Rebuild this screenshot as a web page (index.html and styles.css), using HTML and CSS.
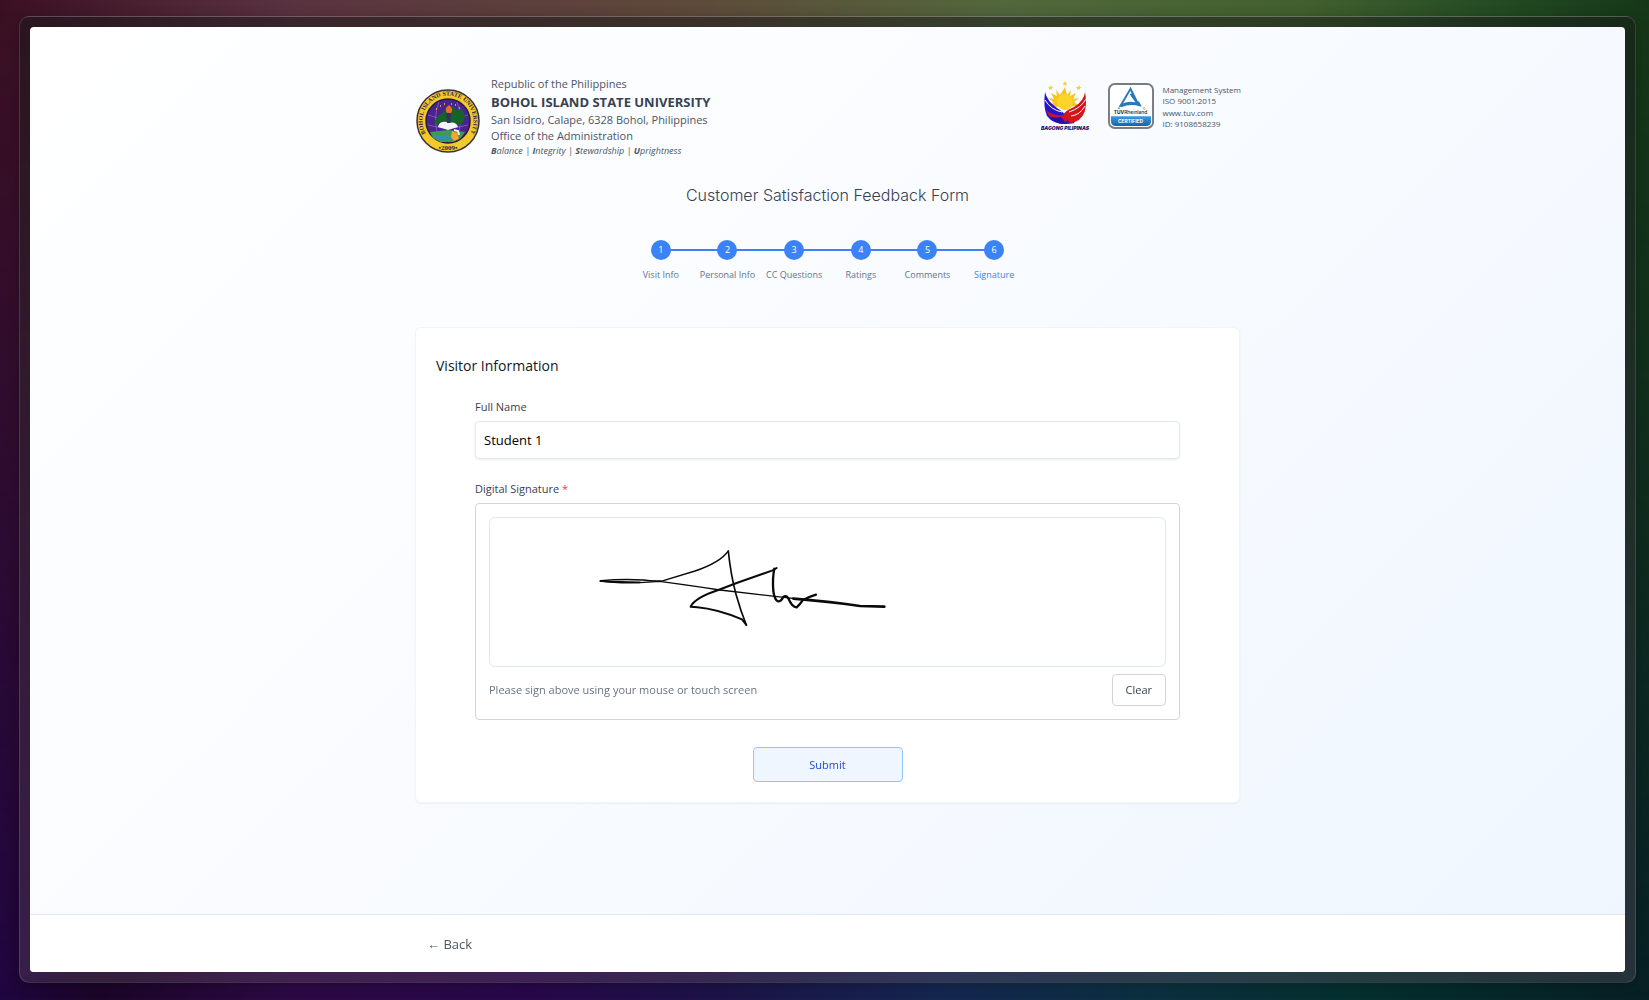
FILE: index.html
```html
<!DOCTYPE html>
<html lang="en">
<head>
<meta charset="utf-8">
<meta name="viewport" content="width=device-width, initial-scale=1">
<title>Customer Satisfaction Feedback Form</title>
<link rel="stylesheet" href="styles.css">
</head>
<body>
<div class="frame">
  <div class="window">
    <main class="page">
      <header class="masthead">
        <div class="school">
          <svg class="seal" viewBox="0 0 64 64" role="img" aria-label="Bohol Island State University seal">
            <defs>
              <path id="ring-top" d="M17.400 52.900A25.500 25.500 0 1 1 46.600 52.900"/>
            </defs>
            <circle cx="32" cy="32" r="31" fill="#f4c92a" stroke="#3b2d3a" stroke-width="1.500"/>
            <circle cx="32" cy="32" r="22" fill="#4a2390" stroke="#2a1a40" stroke-width="1.500"/>
            <path d="M12 26Q32 34 52 26M12 36Q32 42 52 36M23 13Q16 30 23 49M41 13Q48 30 41 49" fill="none" stroke="#8c6cc0" stroke-width=".7"/>
            <path d="M18 33l5-7 5-3 1-5 8-1 3 4 6-1 3 7-2 7-7 3-13 1z" fill="#176327"/>
            <path d="M14 43l18-2 17 2-4 6-8 4H24l-7-4z" fill="#3d9c50"/>
            <path d="M17 47h17M21 50h17" stroke="#3d86cf" stroke-width="1.500"/>
            <path d="M22 38q1-6 9-5l2 1q7-2 9 4l-10 3z" fill="#f4f2ff"/>
            <path d="M30 24h5l-1 10h-3z" fill="#2a3565"/>
            <path d="M31 24q-3-5 2-8 5 4 2 8z" fill="#ef6a2c"/>
            <path d="M36 42l5 2 2 6-5 2-3-4z" fill="#f6a62f"/>
            <path d="M38 41l4 1 1 4" fill="none" stroke="#f5f0e5" stroke-width="2"/>
            <path d="M20 20h1M24 17h1M28 15h1M35 15h1M39 16h1M43 19h1" stroke="#f4c92a" stroke-width="1.500"/>
            <text class="seal-name"><textPath href="#ring-top" startOffset="50%" text-anchor="middle">BOHOL ISLAND STATE UNIVERSITY</textPath></text>
            <text class="seal-year" x="32" y="61" text-anchor="middle">•2009•</text>
          </svg>
          <div class="school-text">
            <p>Republic of the Philippines</p>
            <p class="school-name">BOHOL ISLAND STATE UNIVERSITY</p>
            <p>San Isidro, Calape, 6328 Bohol, Philippines</p>
            <p>Office of the Administration</p>
            <p class="motto"><b>B</b>alance | <b>I</b>ntegrity | <b>S</b>tewardship | <b>U</b>prightness</p>
          </div>
        </div>
        <div class="badges">
          <svg class="bagong" viewBox="0 0 54 52" role="img" aria-label="Bagong Pilipinas">
            <path d="M27 7l2 8 4-5-1 6 6-3-3 6 6-1-5 4 5 4-28 1 2-5-5-4 6 1-3-6 6 3-1-6 4 5z" fill="#f8c51c"/>
            <circle cx="27" cy="22" r="8" fill="#fbd32b"/>
            <path d="M27 1l1 2h2l-2 1 1 2-2-1-2 1 1-2-2-1h2zM13 5l1 2h2l-2 1 0 2-1-1-2 1 0-2-1-1h2zM41 5l1 2h2l-2 1 0 2-1-1-2 1 0-2-1-1h2z" fill="#f6cf3c"/>
            <path d="M7 12q2 9 12 16 7 4 10 10l8 5Q17 47 9 36 5 27 7 12z" fill="#2b12cb"/>
            <path d="M47 12q-1 9-11 15-8 3-11 8l7 8q11-1 15-12 2-9 0-19z" fill="#d3161d"/>
            <path d="M8 30q6 6 17 5l5 3-3 6Q14 44 8 30z" fill="#c31530"/>
            <path d="M11 36q6 3 12 1l6 7Q17 45 11 36z" fill="#2610a8"/>
            <path d="M7 20q6 10 17 12M48 19q-5 9-17 13M47 26q-5 9-14 10" fill="none" stroke="#fff" stroke-width="1"/>
            <text class="bagong-name" x="27" y="50" text-anchor="middle">BAGONG PILIPINAS</text>
          </svg>
          <svg class="tuv" viewBox="0 0 47 47" role="img" aria-label="TÜV Rheinland certified">
            <defs><linearGradient id="tuv-blue" x2="0" y2="1"><stop stop-color="#3f9ade"/><stop offset="1" stop-color="#1762a8"/></linearGradient></defs>
            <rect x="1" y="1" width="45" height="45" rx="6" fill="#fff" stroke="#777c82" stroke-width="2"/>
            <path d="M3 34h41v5a5 5 0 0 1-5 5H8a5 5 0 0 1-5-5z" fill="url(#tuv-blue)"/>
            <path d="M23 6L13 23q9-5 18-1zM23 11l7 10" fill="none" stroke="#2479bd" stroke-width="2"/>
            <path d="M13 24q10-4 20-1l-2-4" fill="none" stroke="#2479bd" stroke-width="1.500"/>
            <circle cx="37" cy="26" r="1" fill="none" stroke="#777" stroke-width=".5"/>
            <text class="tuv-name" x="23" y="32" text-anchor="middle"><tspan font-weight="700">TÜV</tspan>Rheinland</text>
            <text class="tuv-cert" x="23" y="41" text-anchor="middle">CERTIFIED</text>
          </svg>
          <div class="iso">
            <p>Management System<br>ISO 9001:2015</p>
            <p>www.tuv.com<br>ID: 9108658239</p>
          </div>
        </div>
      </header>

      <h1 class="title">Customer Satisfaction Feedback Form</h1>

      <ol class="steps">
        <li><span class="dot">1</span>Visit Info</li>
        <li><span class="dot">2</span>Personal Info</li>
        <li><span class="dot">3</span>CC Questions</li>
        <li><span class="dot">4</span>Ratings</li>
        <li><span class="dot">5</span>Comments</li>
        <li class="current" aria-current="step"><span class="dot">6</span>Signature</li>
      </ol>

      <form class="card">
        <h2 class="card-title">Visitor Information</h2>
        <div class="fields">
          <div class="field">
            <label for="full-name">Full Name</label>
            <input id="full-name" class="input" type="text" value="Student 1">
          </div>
          <div class="field">
            <span class="label" id="sig-label">Digital Signature <span class="required">*</span></span>
            <div class="sign-box" role="group" aria-labelledby="sig-label">
              <svg class="pad" role="img" aria-label="Signature">
                <g transform="translate(90 13) scale(.3333)" fill="none" stroke="#0a0a0a" stroke-linecap="round" stroke-linejoin="round">
                  <path d="M60 150Q110 157 180 155Q210 153 240 151Q310 160 420 177L585 196L700 209" stroke-width="4"/>
                  <path d="M62 149Q130 143 190 147Q225 152 250 149Q290 137 345 120Q420 95 445 60" stroke-width="4"/>
                  <path d="M62 150L90 152L180 154" stroke-width="5"/>
                  <path d="M445 60Q452 130 468 190Q482 240 499 282" stroke-width="5"/>
                  <path d="M499 282L486 265Q410 234 352 229L332 227Q345 200 415 177L470 156Q530 135 578 118L590 111" stroke-width="6"/>
                  <path d="M583 113Q577 140 580 180Q584 208 594 211Q603 212 610 198Q617 191 625 202Q637 230 650 229Q660 220 668 208Q685 198 708 191" stroke-width="7"/>
                  <path d="M640 203Q760 213 840 225L913 227" stroke-width="8"/>
                </g>
              </svg>
              <div class="sign-foot">
                <p>Please sign above using your mouse or touch screen</p>
                <button type="button" class="clear">Clear</button>
              </div>
            </div>
          </div>
        </div>
        <button type="submit" class="submit">Submit</button>
      </form>
    </main>
    <footer class="footer">
      <div class="footer-inner"><button type="button" class="back">← Back</button></div>
    </footer>
  </div>
</div>
</body>
</html>
```
FILE: styles.css
```css
* { box-sizing: border-box; }

body {
  display: flex;
  min-height: 100vh;
  margin: 0;
  padding: 16px 13px 17px 19px;
  font: 11px/16px "Open Sans", "Noto Sans", sans-serif;
  color: #4b5563;
  background: linear-gradient(90deg, #200640, #1b0628 6%, #2d0a45 18%, #28084a 32%, #1c1448 44%, #142850 58%, #0c3040 70%, #05302f 82%, #082025);
}

body::before {
  content: "";
  position: fixed;
  inset: 0;
  z-index: -1;
  background: linear-gradient(90deg, #3a1022, #5a3340 18%, #5e4a3a 42%, #52683c 61%, #42602f 79%, #234a23 91%, #163818);
  mask-image: linear-gradient(#000, transparent);
}

h1, h2, p, ol { margin: 0; }
button, input { font: inherit; }
button { cursor: pointer; }

.frame {
  display: flex;
  flex: 1;
  padding: 10px;
  border: 1px solid rgba(255, 255, 255, .14);
  border-radius: 10px;
  background: linear-gradient(rgba(25, 25, 25, .5), rgba(110, 90, 110, .3));
  box-shadow: 0 2px 12px rgba(0, 0, 0, .25);
}

.window {
  display: flex;
  flex: 1;
  flex-direction: column;
  overflow: hidden;
  border-radius: 4px;
  background: linear-gradient(135deg, #fff, #f8fbff 50%, #eff6ff);
}

.page {
  flex: 1;
  width: 100%;
  max-width: 825px;
  margin: 0 auto;
  padding-top: 49px;
}

.masthead {
  display: flex;
  justify-content: space-between;
  margin: 0 -1px 0 1px;
}

.school {
  display: flex;
  align-items: center;
  gap: 11px;
}

.seal {
  width: 64px;
  height: 64px;
  margin-top: 8px;
}

.seal-name {
  font: 700 6px "Liberation Serif", serif;
  fill: #251c4a;
}

.seal-year {
  font: 700 7px "Liberation Serif", serif;
  fill: #251c4a;
}

.school-name {
  font-size: 13px;
  line-height: 20px;
  font-weight: 700;
  color: #374151;
}

.motto {
  font-size: 9px;
  line-height: 14px;
  font-style: italic;
}

.badges {
  display: flex;
  gap: 8px;
  height: 60px;
  align-items: center;
}

.bagong {
  width: 54px;
  height: 52px;
  margin-right: 8px;
}

.bagong-name {
  font: italic 900 5px Inter, sans-serif;
  fill: #1b1464;
}

.tuv {
  width: 46px;
  height: 46px;
}

.tuv-name {
  font: 500 5px Inter, sans-serif;
  fill: #222;
}

.tuv-cert {
  font: 700 5px Inter, sans-serif;
  fill: #fff;
}

.iso {
  display: grid;
  gap: 1px;
  font-size: 8px;
  line-height: 11px;
}

.title {
  margin-top: 25px;
  font: 300 16px/24px Inter, sans-serif;
  text-align: center;
  color: #374151;
}

.steps {
  display: grid;
  grid-template-columns: repeat(6, 1fr);
  width: 400px;
  margin: 33px auto 0;
  padding: 0;
  list-style: none;
  font-size: 9px;
  line-height: 14px;
  color: #64748b;
}

.steps li {
  position: relative;
  display: flex;
  flex-direction: column;
  align-items: center;
  gap: 8px;
  white-space: nowrap;
}

.steps li + li::before {
  content: "";
  position: absolute;
  top: 9px;
  right: 50%;
  width: 100%;
  height: 2px;
  background: #3b82f6;
}

.dot {
  z-index: 1;
  width: 20px;
  height: 20px;
  border-radius: 50%;
  line-height: 20px;
  text-align: center;
  font-weight: 500;
  color: #fff;
  background: #3b82f6;
}

.steps .current { color: #3b82f6; }

.card {
  margin-top: 45px;
  padding: 28px 20px 20px;
  border: 1px solid #f1f5f9;
  border-radius: 6px;
  background: #fff;
  box-shadow: 0 1px 2px rgba(0, 0, 0, .05);
}

.card-title {
  font-size: 14px;
  line-height: 20px;
  font-weight: 400;
  color: #111827;
}

.fields {
  display: grid;
  gap: 22px;
  margin: 23px 39px 27px;
}

.field {
  display: grid;
  gap: 6px;
  color: #374151;
}

.required { color: #ef4444; }

.input {
  width: 100%;
  height: 38px;
  padding: 0 8px;
  border: 1px solid #e2e8f0;
  border-radius: 4px;
  font-size: 13px;
  color: #000;
  background: #fff;
  box-shadow: 0 1px 2px rgba(0, 0, 0, .08);
}

.sign-box {
  padding: 13px;
  border: 1px solid #d1d5db;
  border-radius: 4px;
}

.pad {
  display: block;
  width: 100%;
  height: 150px;
  border: 1px solid #e2e8f0;
  border-radius: 6px;
}

.sign-foot {
  display: flex;
  align-items: center;
  justify-content: space-between;
  margin-top: 7px;
  color: #6b7280;
}

.clear {
  padding: 7px 13px;
  border: 1px solid #d1d5db;
  border-radius: 4px;
  color: #374151;
  background: #fff;
}

.submit {
  display: block;
  width: 150px;
  height: 35px;
  margin: 0 auto;
  border: 1px solid #93c5fd;
  border-radius: 4px;
  color: #1d4ed8;
  background: #eff6ff;
}

.footer {
  border-top: 1px solid #e2e8f0;
  background: #fff;
}

.footer-inner {
  max-width: 825px;
  margin: 0 auto;
  padding: 15px 12px 14px;
}

.back {
  padding: 6px 0;
  border: 0;
  font-size: 13px;
  color: #4b5563;
  background: none;
}
```
